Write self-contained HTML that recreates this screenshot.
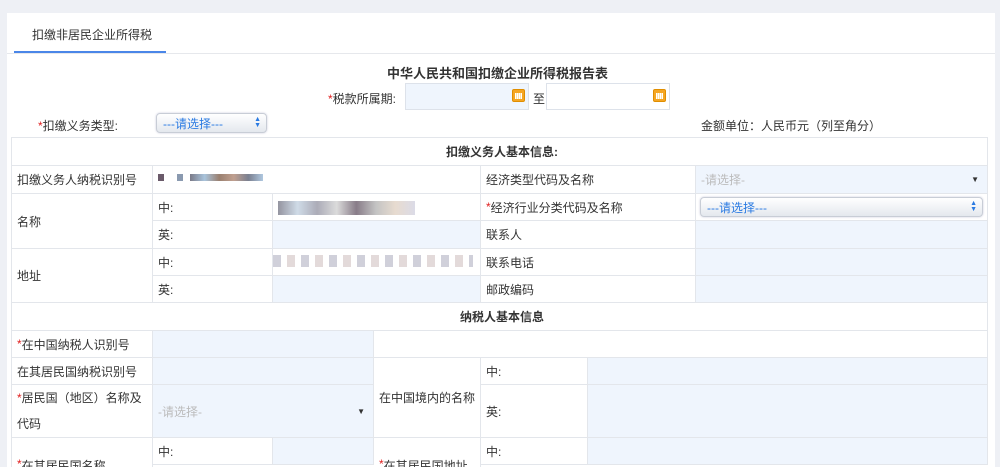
<!DOCTYPE html>
<html><head><meta charset="utf-8"><style>
*{box-sizing:border-box;margin:0;padding:0}
html,body{width:1000px;height:467px;overflow:hidden}
body{background:#eef0f5;font-family:"Liberation Sans","Noto Sans CJK SC",sans-serif;font-size:12px;color:#333;position:relative}
.panel{position:absolute;left:7px;top:13px;width:988px;height:454px;background:#fff}
.a{position:absolute}
.c{position:absolute;border-right:1px solid #e3e6eb;border-bottom:1px solid #e3e6eb;padding-left:5px;display:flex;align-items:center;white-space:nowrap}
.b{background:#eff5fd}
.r{color:#e02020}
.cal{position:absolute;width:13px;height:13px;border-radius:2px;background:#f5a623;border:1px solid #e08e00}
.cal:after{content:"";position:absolute;left:2px;top:3px;width:7px;height:6px;background:repeating-linear-gradient(90deg,#fff 0 1px,transparent 1px 2px),#fde0a8}
.sel{position:absolute;border:1px solid #c8cdd6;border-radius:4px;background:linear-gradient(#fff,#e4e8ee);color:#2a7ae2;padding-left:6px;display:flex;align-items:center;box-shadow:0 0 2px #ccd}
.arr{position:absolute;right:5px;top:50%;transform:translateY(-50%);color:#2a7ae2;font-size:7px;line-height:6px}
.px{position:absolute;height:7px}
.tbl{position:absolute;left:11px;top:137px;width:977px;height:330px;overflow:hidden;border-left:1px solid #e3e6eb;border-top:1px solid #e3e6eb}
</style></head><body>
<div class="panel"></div>
<div class="a" style="left:32px;top:26px;font-size:12px;color:#333">扣缴非居民企业所得税</div>
<div class="a" style="left:14px;top:51px;width:152px;height:2px;background:#4a86e8"></div>
<div class="a" style="left:7px;top:53px;width:988px;height:1px;background:#e6e8ec"></div>
<div class="a" style="left:387px;top:63px;font-size:13px;font-weight:bold;color:#333">中华人民共和国扣缴企业所得税报告表</div>
<div class="a" style="left:328px;top:90px"><span class="r">*</span>税款所属期:</div>
<div class="a b" style="left:405px;top:83px;width:124px;height:27px;border:1px solid #dde2ea"></div>
<div class="cal" style="left:512px;top:89px"></div>
<div class="a" style="left:533px;top:90px">至</div>
<div class="a" style="left:546px;top:83px;width:124px;height:27px;border:1px solid #dde2ea;background:#fff"></div>
<div class="cal" style="left:653px;top:89px"></div>
<div class="a" style="left:38px;top:117px"><span class="r">*</span>扣缴义务类型:</div>
<div class="sel" style="left:156px;top:113px;width:111px;height:20px">---请选择---<span class="arr">▲<br>▼</span></div>
<div class="a" style="left:701px;top:117px">金额单位：人民币元（列至角分）</div>

<div class="tbl">
<div class="c" style="left:0;top:0;width:976px;height:28px;justify-content:center;font-weight:bold">扣缴义务人基本信息:</div>
<div class="c" style="left:0;top:28px;width:141px;height:28px">扣缴义务人纳税识别号</div>
<div class="c" style="left:141px;top:28px;width:328px;height:28px"></div>
<div class="c" style="left:469px;top:28px;width:215px;height:28px">经济类型代码及名称</div>
<div class="c b" style="left:684px;top:28px;width:292px;height:28px;color:#bbb">-请选择-<span class="a" style="right:8px;color:#333;font-size:8px">▼</span></div>
<div class="c" style="left:0;top:56px;width:141px;height:55px">名称</div>
<div class="c" style="left:141px;top:56px;width:120px;height:27px">中:</div>
<div class="c" style="left:261px;top:56px;width:208px;height:27px"></div>
<div class="c" style="left:469px;top:56px;width:215px;height:27px"><span class="r">*</span>经济行业分类代码及名称</div>
<div class="c" style="left:684px;top:56px;width:292px;height:27px"><div class="sel" style="left:4px;top:3px;width:283px;height:20px">---请选择---<span class="arr">▲<br>▼</span></div></div>
<div class="c" style="left:141px;top:83px;width:120px;height:28px">英:</div>
<div class="c b" style="left:261px;top:83px;width:208px;height:28px"></div>
<div class="c" style="left:469px;top:83px;width:215px;height:28px">联系人</div>
<div class="c b" style="left:684px;top:83px;width:292px;height:28px"></div>
<div class="c" style="left:0;top:111px;width:141px;height:54px">地址</div>
<div class="c" style="left:141px;top:111px;width:120px;height:27px">中:</div>
<div class="c" style="left:261px;top:111px;width:208px;height:27px"></div>
<div class="c" style="left:469px;top:111px;width:215px;height:27px">联系电话</div>
<div class="c b" style="left:684px;top:111px;width:292px;height:27px"></div>
<div class="c" style="left:141px;top:138px;width:120px;height:27px">英:</div>
<div class="c b" style="left:261px;top:138px;width:208px;height:27px"></div>
<div class="c" style="left:469px;top:138px;width:215px;height:27px">邮政编码</div>
<div class="c b" style="left:684px;top:138px;width:292px;height:27px"></div>
<div class="c" style="left:0;top:165px;width:976px;height:28px;justify-content:center;font-weight:bold">纳税人基本信息</div>
<div class="c" style="left:0;top:193px;width:141px;height:27px"><span class="r">*</span>在中国纳税人识别号</div>
<div class="c b" style="left:141px;top:193px;width:221px;height:27px"></div>
<div class="c" style="left:362px;top:193px;width:614px;height:27px"></div>
<div class="c" style="left:0;top:220px;width:141px;height:27px">在其居民国纳税识别号</div>
<div class="c b" style="left:141px;top:220px;width:221px;height:27px"></div>
<div class="c" style="left:362px;top:220px;width:107px;height:80px">在中国境内的名称</div>
<div class="c" style="left:469px;top:220px;width:107px;height:27px">中:</div>
<div class="c b" style="left:576px;top:220px;width:400px;height:27px"></div>
<div class="c" style="left:0;top:247px;width:141px;height:53px;white-space:normal;line-height:26px"><span><span class="r">*</span>居民国（地区）名称及代码</span></div>
<div class="c b" style="left:141px;top:247px;width:221px;height:53px;color:#bbb">-请选择-<span class="a" style="right:8px;color:#333;font-size:8px">▼</span></div>
<div class="c" style="left:469px;top:247px;width:107px;height:53px">英:</div>
<div class="c b" style="left:576px;top:247px;width:400px;height:53px"></div>
<div class="c" style="left:0;top:300px;width:141px;height:54px;align-items:flex-start;padding-top:19px"><span class="r">*</span>在其居民国名称</div>
<div class="c" style="left:141px;top:300px;width:120px;height:27px">中:</div>
<div class="c b" style="left:261px;top:300px;width:101px;height:27px"></div>
<div class="c" style="left:362px;top:300px;width:107px;height:54px;align-items:flex-start;padding-top:19px"><span class="r">*</span>在其居民国地址</div>
<div class="c" style="left:469px;top:300px;width:107px;height:27px">中:</div>
<div class="c b" style="left:576px;top:300px;width:400px;height:27px"></div>
</div>

<div class="px" style="left:158px;top:174px;width:6px;background:#6a5a6a"></div>
<div class="px" style="left:177px;top:174px;width:6px;background:#8a9ab0"></div>
<div class="px" style="left:190px;top:174px;width:73px;background:linear-gradient(90deg,#7a7a88,#a9c4dc,#9a8070,#c0a090,#7a8090,#b0c8e0)"></div>
<div class="px" style="left:278px;top:201px;width:137px;height:14px;opacity:.7;background:linear-gradient(90deg,#667,#bcd,#889,#ccc,#545,#aaa,#dcb,#ccd)"></div>
<div class="px" style="left:273px;top:255px;width:200px;height:12px;opacity:.55;background:repeating-linear-gradient(90deg,#aab 0 8px,#fff 8px 14px,#cbb 14px 22px,#fff 22px 28px)"></div>
</body></html>
